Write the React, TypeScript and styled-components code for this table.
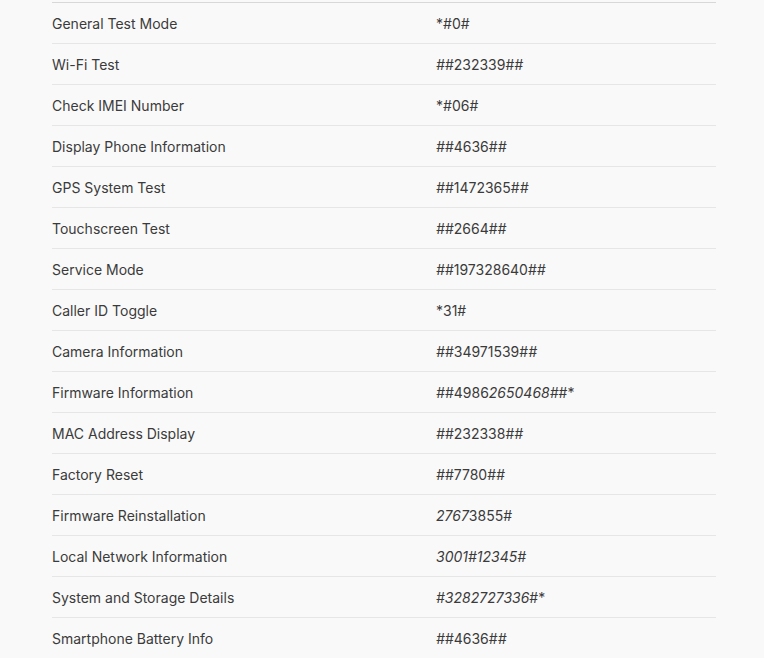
import React from "react";
import styled, { createGlobalStyle } from "styled-components";

const Global = createGlobalStyle`
  html, body { margin: 0; padding: 0; background: #f9f9f9; }
  body { font-family: Inter, "Noto Sans", sans-serif; }
`;

const Page = styled.div`
  padding: 2px 48px 0 52px;
  background: #f9f9f9;
  min-height: 658px;
  box-sizing: border-box;
`;

const Table = styled.div`
  width: 664px;
  border-top: 1px solid #d8d8d8;
`;

const Row = styled.div`
  display: grid;
  grid-template-columns: 384px 280px;
  height: 40px;
  align-items: center;
  border-bottom: 1px solid #e6e6e6;
  font-size: 14px;
  color: #3b3b3b;
`;

const Name = styled.div``;

const Code = styled.div`
  em { font-style: italic; }
`;

type Item = { name: string; code: React.ReactNode };

const items: Item[] = [
  { name: "General Test Mode", code: "*#0#" },
  { name: "Wi-Fi Test", code: <><em>#</em>#232339#<em>#</em></> },
  { name: "Check IMEI Number", code: "*#06#" },
  { name: "Display Phone Information", code: <><em>#</em>#4636#<em>#</em></> },
  { name: "GPS System Test", code: <><em>#</em>#1472365#<em>#</em></> },
  { name: "Touchscreen Test", code: <><em>#</em>#2664#<em>#</em></> },
  { name: "Service Mode", code: <><em>#</em>#197328640#<em>#</em></> },
  { name: "Caller ID Toggle", code: "*31#" },
  { name: "Camera Information", code: <><em>#</em>#34971539#<em>#</em></> },
  { name: "Firmware Information", code: <><em>#</em>#4986<em>2650468#</em>#*</> },
  { name: "MAC Address Display", code: <><em>#</em>#232338#<em>#</em></> },
  { name: "Factory Reset", code: <><em>#</em>#7780#<em>#</em></> },
  { name: "Firmware Reinstallation", code: <><em>2767</em>3855#</> },
  { name: "Local Network Information", code: <em>3001#12345#</em> },
  { name: "System and Storage Details", code: <><em>#3282727336</em>#*</> },
  { name: "Smartphone Battery Info", code: <><em>#</em>#4636#<em>#</em></> },
];

export default function App() {
  return (
    <>
      <Global />
      <Page>
        <Table>
          {items.map((it) => (
            <Row key={it.name}>
              <Name>{it.name}</Name>
              <Code>{it.code}</Code>
            </Row>
          ))}
        </Table>
      </Page>
    </>
  );
}
